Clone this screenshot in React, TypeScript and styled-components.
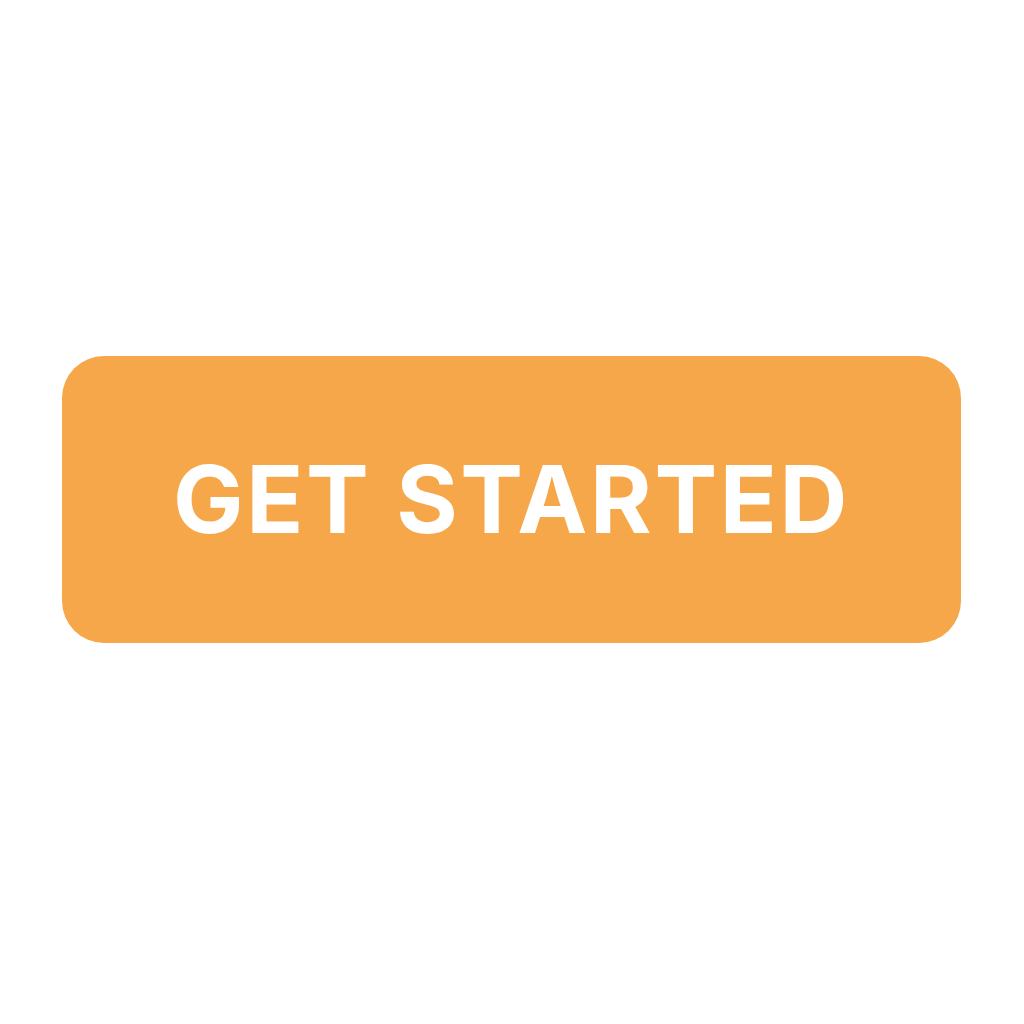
import React from "react";
import styled, { createGlobalStyle } from "styled-components";

const Global = createGlobalStyle`
  html, body { margin: 0; padding: 0; background: #ffffff; }
  body { font-family: Inter, "Liberation Sans", sans-serif; }
`;

const Page = styled.main`
  width: 1024px;
  height: 1024px;
  box-sizing: border-box;
  padding: 356px 0 0 62px;
  display: flex;
  align-items: flex-start;
`;

const Button = styled.button`
  width: 899px;
  height: 287px;
  border: none;
  border-radius: 42px;
  background: #f6a74a;
  color: #ffffff;
  font-family: Inter, "Liberation Sans", sans-serif;
  font-weight: 700;
  font-size: 94px;
  letter-spacing: 2.6px;
  display: flex;
  align-items: center;
  justify-content: center;
  padding: 0 0 2px 0;
  cursor: pointer;
`;

export default function App() {
  return (
    <>
      <Global />
      <Page>
        <Button>GET STARTED</Button>
      </Page>
    </>
  );
}
